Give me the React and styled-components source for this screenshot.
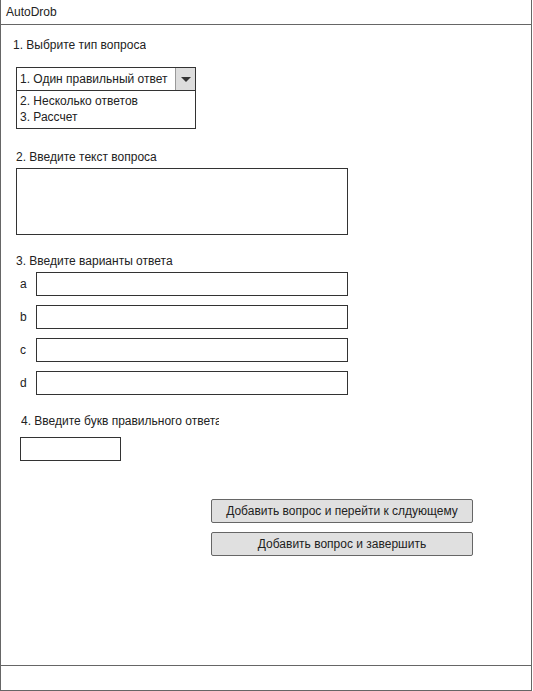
import React from 'react';
import styled, { createGlobalStyle } from 'styled-components';

const GlobalStyle = createGlobalStyle`
  html, body {
    margin: 0;
    padding: 0;
    background: #fff;
  }
  body {
    font-family: 'Liberation Sans', Arial, sans-serif;
    font-size: 12px;
    color: #222;
  }
`;

const answers = ['a', 'b', 'c', 'd'];

const Window = styled.div`
  box-sizing: border-box;
  width: 532px;
  height: 691px;
  border: 1px solid #666;
  border-top: none;
  display: flex;
  flex-direction: column;
`;

const TitleBar = styled.div`
  height: 25px;
  box-sizing: border-box;
  border-bottom: 1px solid #666;
  padding: 5px 0 0 5px;
`;

const Body = styled.div`
  flex: 1;
  padding: 13px 0 0 15px;
  display: flex;
  flex-direction: column;
  align-items: flex-start;
`;

const Footer = styled.div`
  height: 24px;
  border-top: 1px solid #666;
`;

const Label = styled.div`
  margin-left: ${({ indent }) => indent || 0}px;
  margin-top: ${({ gap }) => gap || 0}px;
  line-height: 14px;
  white-space: nowrap;
  overflow: hidden;
  max-width: ${({ clip }) => (clip ? `${clip}px` : 'none')};
`;

const Select = styled.div`
  margin-top: 15px;
  width: 180px;
`;

const SelectHead = styled.div`
  display: flex;
  height: 24px;
  box-sizing: border-box;
  border: 1px solid #333;
`;

const SelectValue = styled.div`
  flex: 1;
  padding: 4px 0 0 3px;
`;

const SelectArrow = styled.div`
  width: 19px;
  background: #ddd;
  border-left: 1px solid #999;
  display: flex;
  align-items: center;
  justify-content: center;
  &::after {
    content: '';
    border-left: 5px solid transparent;
    border-right: 5px solid transparent;
    border-top: 5px solid #333;
  }
`;

const SelectList = styled.div`
  border: 1px solid #333;
  border-top: none;
  padding: 2px 2px 3px 3px;
  line-height: 16px;
`;

const TextArea = styled.div`
  margin-top: 4px;
  width: 332px;
  height: 67px;
  box-sizing: border-box;
  border: 1px solid #333;
`;

const AnswerList = styled.div`
  margin-top: 4px;
  display: flex;
  flex-direction: column;
  gap: 9px;
`;

const AnswerRow = styled.div`
  display: flex;
  align-items: center;
`;

const Letter = styled.span`
  width: 20px;
  padding-left: 4px;
  box-sizing: border-box;
`;

const Field = styled.div`
  width: ${({ w }) => w}px;
  height: 24px;
  box-sizing: border-box;
  border: 1px solid #333;
`;

const KeyField = styled(Field)`
  margin: 9px 0 0 4px;
`;

const Buttons = styled.div`
  margin: 38px 0 0 195px;
  display: flex;
  flex-direction: column;
  gap: 9px;
`;

const Button = styled.div`
  width: 262px;
  height: 24px;
  box-sizing: border-box;
  border: 1px solid #666;
  border-radius: 2px;
  background: #e0e0e0;
  display: flex;
  align-items: center;
  justify-content: center;
`;

export default function App() {
  return (
    <>
      <GlobalStyle />
      <Window>
        <TitleBar>AutoDrob</TitleBar>
        <Body>
          <Label indent={-3}>1. Выбрите тип вопроса</Label>
          <Select>
            <SelectHead>
              <SelectValue>1. Один правильный ответ</SelectValue>
              <SelectArrow />
            </SelectHead>
            <SelectList>
              <div>2. Несколько ответов</div>
              <div>3. Рассчет</div>
            </SelectList>
          </Select>
          <Label gap={21}>2. Введите текст вопроса</Label>
          <TextArea />
          <Label gap={19}>3. Введите варианты ответа</Label>
          <AnswerList>
            {answers.map((l) => (
              <AnswerRow key={l}>
                <Letter>{l}</Letter>
                <Field w={312} />
              </AnswerRow>
            ))}
          </AnswerList>
          <Label gap={19} indent={5} clip={198}>4. Введите букв правильного ответа</Label>
          <KeyField w={101} />
          <Buttons>
            <Button>Добавить вопрос и перейти к слдующему</Button>
            <Button>Добавить вопрос и завершить</Button>
          </Buttons>
        </Body>
        <Footer />
      </Window>
    </>
  );
}
